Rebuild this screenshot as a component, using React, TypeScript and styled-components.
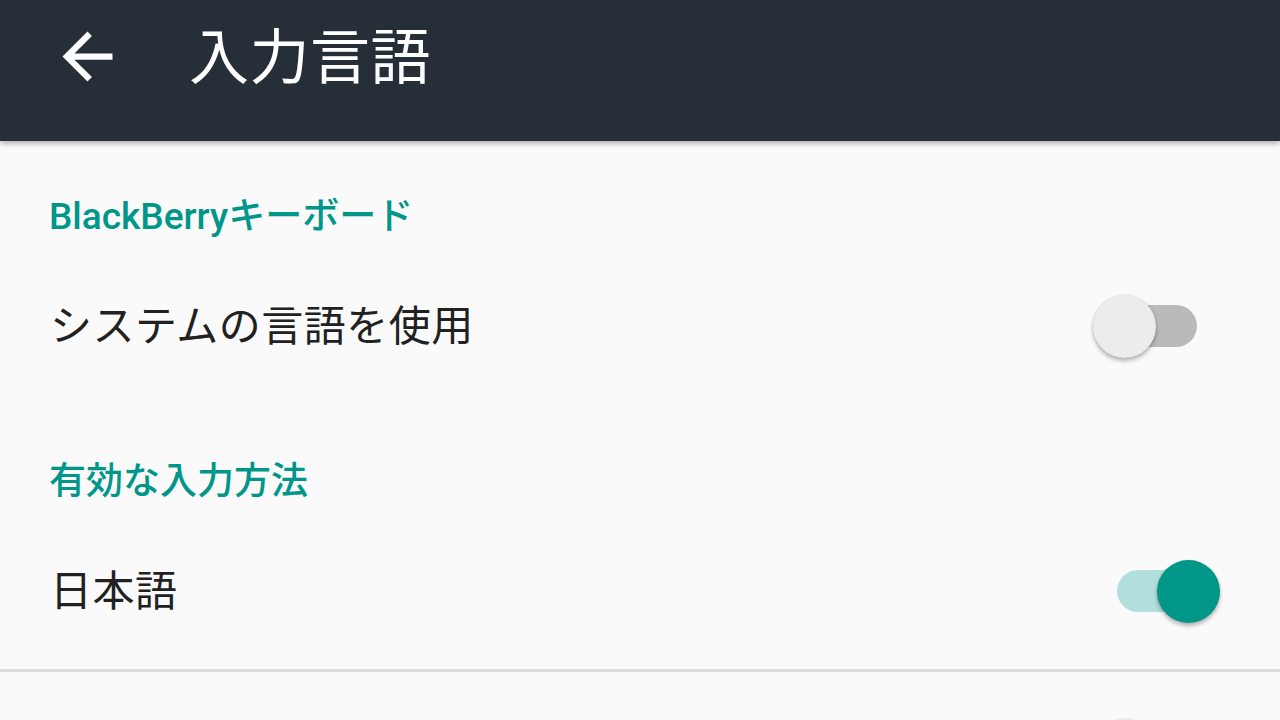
import React from "react";
import styled, { createGlobalStyle } from "styled-components";

const GlobalStyle = createGlobalStyle`
  html, body {
    margin: 0;
    padding: 0;
    background: #fafafa;
  }
  body {
    width: 1280px;
    height: 720px;
    overflow: hidden;
    font-family: "Roboto", "Noto Sans CJK JP", sans-serif;
  }
`;

const Screen = styled.div`
  width: 1280px;
  height: 720px;
  overflow: hidden;
  background: #fafafa;
  display: flex;
  flex-direction: column;
`;

const AppBar = styled.header`
  height: 141px;
  flex: none;
  background: #262e38;
  box-shadow: 0 2px 6px rgba(0, 0, 0, 0.35);
  position: relative;
  z-index: 1;
`;

const Toolbar = styled.div`
  height: 112px;
  display: flex;
  align-items: center;
  padding-left: 50px;
`;

const BackButton = styled.button`
  width: 75px;
  height: 75px;
  padding: 0;
  border: none;
  background: transparent;
  display: flex;
  align-items: center;
  justify-content: center;
  margin-right: 64px;
`;

const Title = styled.h1`
  margin: 0;
  padding-bottom: 6px;
  color: #ffffff;
  font-family: "Noto Sans CJK JP", sans-serif;
  font-weight: 400;
  font-size: 60px;
  line-height: 72px;
  letter-spacing: 0.5px;
`;

const List = styled.main`
  flex: 1;
  display: flex;
  flex-direction: column;
`;

const Category = styled.div<{ $top: number }>`
  padding: ${(p) => p.$top}px 0 0 49px;
  height: 73px;
  display: flex;
  align-items: center;
  box-sizing: content-box;
`;

const CategoryText = styled.span`
  padding-bottom: 5px;
  color: #00968a;
  font-family: "Roboto", "Noto Sans CJK JP", sans-serif;
  font-weight: 500;
  font-size: 37px;
  line-height: 48px;
`;

const Row = styled.div<{ $height?: number }>`
  height: ${(p) => p.$height ?? 140}px;
  flex: none;
  display: flex;
  align-items: center;
  justify-content: space-between;
  padding: 0 83px 0 50px;
`;

const RowLabel = styled.span`
  padding-bottom: 6px;
  color: #212121;
  font-family: "Noto Sans CJK JP", sans-serif;
  font-weight: 400;
  font-size: 42px;
  line-height: 56px;
  letter-spacing: 0.5px;
`;

const Divider = styled.hr`
  margin: 8px 0 0;
  border: none;
  height: 3px;
  flex: none;
  background: #dcdcdc;
`;

const Switch = styled.div<{ $on: boolean }>`
  position: relative;
  margin-left: auto;
  width: 80px;
  height: 42px;
  border-radius: 21px;
  background: ${(p) => (p.$on ? "#b2dfdb" : "#bababa")};
`;

const Thumb = styled.div<{ $on: boolean }>`
  position: absolute;
  top: -10px;
  left: ${(p) => (p.$on ? "40px" : "-24px")};
  width: 63px;
  height: 63px;
  border-radius: 50%;
  background: ${(p) => (p.$on ? "#009688" : "#ececec")};
  box-shadow: 0 3px 4px rgba(0, 0, 0, 0.28), 0 0 2px rgba(0, 0, 0, 0.12);
`;

const ArrowBack = () => (
  <svg width="75" height="75" viewBox="0 0 24 24" aria-hidden="true">
    <path
      fill="#ffffff"
      d="M20 11H7.83l5.59-5.59L12 4l-8 8 8 8 1.41-1.41L7.83 13H20v-2z"
    />
  </svg>
);

const Toggle = ({ on }: { on: boolean }) => (
  <Switch $on={on}>
    <Thumb $on={on} />
  </Switch>
);

export default function App() {
  return (
    <>
      <GlobalStyle />
      <Screen>
        <AppBar>
          <Toolbar>
            <BackButton aria-label="戻る">
              <ArrowBack />
            </BackButton>
            <Title>入力言語</Title>
          </Toolbar>
        </AppBar>
        <List>
          <Category $top={42}>
            <CategoryText>BlackBerryキーボード</CategoryText>
          </Category>
          <Row>
            <RowLabel>システムの言語を使用</RowLabel>
            <Toggle on={false} />
          </Row>
          <Category $top={52}>
            <CategoryText>有効な入力方法</CategoryText>
          </Category>
          <Row>
            <RowLabel>日本語</RowLabel>
            <Toggle on={true} />
          </Row>
          <Divider />
          <Row $height={156}>
            <Toggle on={false} />
          </Row>
        </List>
      </Screen>
    </>
  );
}
